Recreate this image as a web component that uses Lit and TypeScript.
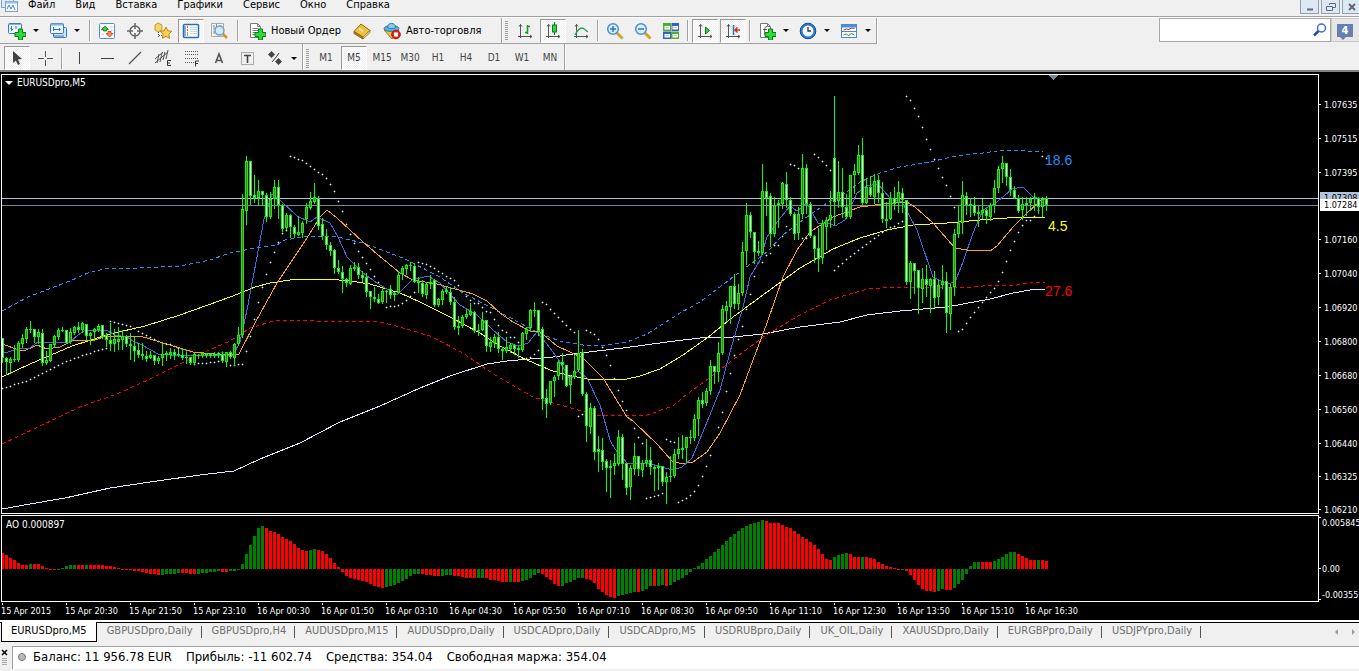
import { LitElement, html, svg, css, nothing } from "lit";
import { customElement, state } from "lit/decorators.js";
import { classMap } from "lit/directives/class-map.js";

/* Bars are 4px apart. Each record is high, body top, body bottom, low; u = rising, d = falling. */
const STEP = 4;
const LEFT = 2;
const CANDLES = `
338,338,358,362d 357,358,362,374d 357,359,363,372u 345,359,360,361d 341,343,360,361u 334,338,344,347u 327,329,339,342u 321,329,330,332d
329,329,337,342d 329,332,337,343u 329,333,363,365d 351,360,363,364u 344,344,361,361u 335,336,345,347u 328,330,337,339u 327,330,331,331d
330,330,343,343d 328,332,342,343u 326,327,333,334u 322,327,330,332d 322,323,330,332u 324,324,336,339d 332,333,336,344u 328,329,332,339u
324,326,330,331u 325,325,337,338d 333,335,340,346d 323,340,344,350d 329,339,344,351u 327,339,342,349u 330,336,340,349u 335,336,344,346d
333,344,346,359d 337,346,351,361d 343,350,355,357d 343,354,356,359d 351,356,359,361d 351,355,358,358u 355,355,361,364d 356,358,361,363u
343,354,358,365u 351,353,355,360u 348,352,355,358u 349,352,355,359d 349,354,355,356d 349,355,358,359d 352,357,358,363d 357,357,363,364d
353,354,363,364u 354,355,356,358d 353,353,356,357u 353,354,356,357d 353,354,356,357u 352,354,356,357u 352,353,355,357u 352,354,361,362d
352,352,362,366u 351,352,357,358d 343,344,358,365u 327,335,344,345u 194,209,335,337u 156,161,211,224u 161,161,196,204d 175,195,198,202d
180,191,198,205u 191,191,195,205d 193,195,217,221d 192,199,217,218u 180,187,199,208u 180,187,205,218d 204,205,229,231d 213,215,228,229u
214,215,227,237d 225,227,234,237d 216,232,235,235u 221,223,233,237u 203,207,219,223u 192,201,208,209u 183,197,202,203u 196,198,226,229d
218,224,236,239d 229,236,245,249d 242,245,251,255d 249,250,268,273d 260,268,272,273d 266,272,279,292d 278,279,283,286d 265,268,284,284u
262,267,269,270d 263,267,275,278d 271,275,278,281d 273,277,292,296d 291,291,297,308d 287,297,299,301d 294,299,303,303d 289,291,302,303u
290,291,292,302d 285,289,295,298d 292,293,295,300u 271,275,293,293u 266,268,274,279u 264,265,269,274u 262,265,266,270d 264,266,282,282d
277,281,283,292d 280,283,294,296d 282,284,295,298u 275,282,284,288u 279,280,305,306d 298,299,305,306u 289,291,300,304u 287,290,292,293d
287,292,302,304d 297,302,327,329d 316,326,328,334d 315,317,326,327u 309,314,317,318u 303,311,315,315u 311,312,331,332d 324,330,331,335d
312,320,330,330u 320,320,346,351d 337,342,347,351u 334,337,343,347u 332,337,349,352d 347,349,351,359d 337,347,351,352u 343,345,349,352u
344,345,349,354d 346,348,350,357d 332,333,350,351u 327,329,334,339u 309,310,328,331u 302,310,311,316d 310,310,331,335d 327,329,399,409d
389,398,404,417d 381,381,403,404u 375,377,381,396u 361,362,376,379u 353,362,365,379d 365,365,386,386d 375,376,385,403u 355,371,377,378u
330,353,370,371u 349,352,394,395d 392,394,426,441d 403,408,427,433u 406,408,452,459d 436,449,452,471d 438,450,462,469d 459,461,468,491d
460,466,468,497d 454,463,466,474u 430,437,464,465u 434,437,464,479d 463,463,488,494d 465,468,487,499u 443,456,469,474u 456,456,469,475d
460,463,470,476u 439,460,463,466u 447,460,467,474d 466,467,469,490d 463,466,468,489u 466,466,482,485d 472,477,482,503u 456,476,477,481d
449,454,476,477u 437,449,454,458u 435,448,450,458u 437,437,448,462u 430,437,438,443d 414,419,438,440u 397,400,419,435u 392,400,404,407d
388,391,403,405u 360,366,391,394u 366,366,372,383d 342,353,372,381u 305,309,353,354u 301,306,311,321u 286,286,307,323u 274,286,304,308d
284,293,304,309u 242,252,293,295u 203,215,251,264u 212,215,232,237d 232,232,252,263d 241,251,253,255u 164,191,253,254u 182,191,198,215d
193,196,234,246d 197,205,234,236u 200,203,205,227u 182,183,204,208u 172,184,200,207d 197,200,214,215d 212,214,234,239d 207,214,233,239u
154,168,214,218u 164,168,204,213d 202,204,236,237d 235,236,249,262d 228,248,259,271d 220,223,258,263u 217,220,227,249u 191,215,220,227u
96,158,202,224d 161,192,201,207u 168,192,207,217d 194,207,217,218d 175,175,217,218u 164,171,175,193u 145,155,173,174u 138,155,203,204d
178,187,203,203u 176,187,195,196d 174,181,197,203u 175,180,193,202d 182,193,219,222d 202,219,221,227u 192,198,219,219u 187,198,204,209d
181,192,203,212u 188,193,200,212d 200,200,282,284d 261,263,282,298u 263,263,271,293d 270,270,288,313d 268,279,289,302u 265,279,285,296d
278,279,286,312u 271,279,298,307d 280,285,297,304u 265,281,285,288u 272,281,313,332d 284,287,314,329u 229,234,287,295u 205,223,234,237u
181,195,223,233u 192,196,205,214d 198,204,206,216d 197,205,213,215d 205,212,214,226d 199,210,213,218u 209,210,216,223d 203,205,217,220u
180,188,205,212u 166,169,188,192u 156,163,169,182u 163,163,177,185d 169,177,190,195d 186,190,198,198d 195,198,211,212d 197,204,210,219u
197,203,205,215u 197,199,203,210u 193,197,199,210u 197,198,207,213d 197,199,207,216u 196,198,205,210d`
  .trim().split(/\s+/)
  .map((r) => ({ up: r.endsWith("u"), v: r.slice(0, -1).split(",").map(Number) }));

/* Parabolic SAR: first bar index, then the level of each following bar. */
const SAR: [number, number[]][] = [
  [0, [388,387,386,384,383,382,381,379,377,375,373,371,369,367,365,363,361,360,358,357,355,354,353,351,350,349,348]],
  [27, [321,322,323,324,325,326,328,331,333,335,337,339,341,343,344,344,346,348,349,350,351]],
  [48, [364,363,363,363,362,362,361,352]],
  [57, [365,365,364,364,351,336,319,302,287,274,262,252,242,233,230]],
  [72, [156,157,159,160,163,166,169,172,174,178,184,191,201,211,224,234,243,251,257,263,269,276,282,287]],
  [96, [307,306,306,305,303,300,296,292]],
  [104, [262,263,264,266,268,271,273,276,278,280,285,291,296,300,303,303,307,311,312,319,325,330,332,337,337,342]],
  [130, [358,358,357,354,350]],
  [135, [302,304,309,313,317,321,325,329,332]],
  [144, [416,414]],
  [146, [330,332,334,339,347,355,365,378,390,401,410,419,428,437,443]],
  [161, [498,497,496,495,493]],
  [166, [439,441,442]],
  [169, [502,500,498,495,491,485,476,466,455,440,427,412,391,373,355,339,326,309,294,276,262,262,255,253,245,245,236,226]],
  [197, [164,165,168,238,238]],
  [203, [154,157,161,165,170]],
  [208, [270,266,263,259,256,253,250,247,244,241,238,235,232,230,227,226,223,221]],
  [226, [96,100,108,116,127,139,149,159,168,177,185,196,207]],
  [239, [331,329,323,317,312,307,302,297,292,288,281,272,261,250,241,232,225,220,220,216,210,156,158]],
];

const LINES = [
  { cls: "long", pts: "2,509 30,504 65,498 110,488 150,482 200,475 234,471 260,459 300,443 340,422 380,406 420,388 450,376 487,364 507,361 530,359 553,357 580,353 623,348 667,342 700,338 733,337 763,334 800,327 840,322 867,315 900,311 947,307 963,304 990,299 1013,293 1030,290 1045,289" },
  { cls: "lower", pts: "2,444 40,426 80,407 117,394 150,379 180,364 200,354 230,341 250,328 277,320 287,321 300,320 333,322 343,321 380,322 400,327 430,336 463,353 486,369 500,378 533,397 567,407 597,415 623,416 647,415 673,406 687,394 700,385 730,362 763,337 800,315 830,300 867,289 900,287 973,287 993,285 1010,286 1030,283 1045,282" },
  { cls: "upper", pts: "2,311 28,297 70,281 90,272 110,268 140,268 180,266 210,260 230,253 250,249 277,245 285,240 303,237 333,236 363,243 403,258 440,277 463,293 490,307 520,323 538,333 560,341 583,345 607,345 627,342 647,334 680,313 700,302 733,277 767,252 783,235 807,217 827,203 843,195 860,182 880,173 900,167 930,162 947,158 963,155 983,153 997,151 1013,150 1027,151 1043,151" },
  { cls: "mid", pts: "2,377 30,364 72,346 110,334 145,326 180,315 233,296 255,287 270,283 297,279 327,279 350,281 370,284 400,293 420,302 450,317 480,333 500,346 527,360 550,370 567,375 587,379 607,380 627,379 640,376 660,369 683,355 707,338 733,317 767,292 800,268 833,249 860,238 887,230 913,225 947,223 980,220 1020,217 1045,217" },
  { cls: "slow", pts: "2,344 16,349 24,351 37,345 47,349 60,347 72,341 95,340 106,336 140,336 160,342 193,352 215,354 239,354 255,323 277,283 307,238 320,217 327,210 337,218 363,242 377,254 400,273 413,280 437,284 473,294 487,301 500,313 513,322 530,331 540,332 557,346 583,358 603,378 627,417 633,421 658,445 672,461 682,464 693,462 707,452 720,433 740,395 750,368 767,323 783,277 797,250 810,232 833,217 860,207 883,204 907,202 915,207 933,223 955,248 967,250 990,251 997,246 1013,227 1027,213 1040,201 1045,198" },
  { cls: "fast", pts: "2,353 8,352 20,348 30,348 38,342 70,342 78,335 84,331 97,330 106,330 115,335 127,337 133,341 142,345 158,354 170,355 197,356 233,355 240,342 247,310 254,273 264,219 272,194 280,200 297,216 310,222 317,217 330,223 338,237 347,257 363,273 377,283 397,295 412,280 428,276 440,283 460,305 477,315 493,330 507,342 518,346 528,343 537,332 550,348 560,362 570,380 578,371 587,378 600,405 610,440 615,449 627,463 647,463 662,467 672,470 682,467 692,458 705,427 720,390 730,352 743,307 750,277 760,260 767,237 777,222 790,206 797,211 807,203 818,223 828,223 835,226 845,220 857,193 867,186 878,184 890,198 902,202 917,230 933,277 947,284 955,282 963,262 973,233 983,210 997,202 1012,189 1023,187 1033,197 1045,200" },
];

/* Awesome Oscillator: runs of one colour, bar heights in pixels. */
const AO = `r16,14,11,9,6,4,4 g5 r5,5,3,1,-1,-1 g-1,1,3,4,4 r4,4 g4 r4,4,4,4,3,3,2,1,-1,-1,-1,-2,-2,-3,-4,-5,-5,-6
g-6,-5,-5,-5,-4 r-4,-4,-5,-5 g-5,-4,-4,-3,-3,-2 r-3,-3 g-2,-2,-1,5,15,24,33,41,43
r41,38,37,35,32,30,28,25,21,19,18 g19,20 r19,18,15,11,6,2,-3,-7,-9,-10,-11,-12,-13,-15,-17,-18,-19
g-18,-17,-16,-14,-12,-10,-7,-5,-5 r-5,-6,-6,-7,-7 g-7,-6,-6 r-7,-7,-8,-9,-9,-9 g-9,-9 r-9,-11,-11,-12,-13,-13 g-13 r-13,-13
g-12,-11,-9,-6,-4 r-5,-8,-11,-15,-17 g-17,-14,-13,-11,-9,-9 r-10,-11,-14,-20,-23,-26,-28,-29 g-27,-26,-25,-24,-23 r-23
g-22,-20,-17 r-17 g-17,-16 r-17 g-16,-13,-11,-9,-6,-3,1,3,6,10,13,17,20,24,28,32,35,38,41,43,45,46,47,49
r48,46,46,46,44,42,41,38,35,32,30,27,24,20,15,10,9 g12,14,15,16 r15,12,12 g12 r12,11,10,7,5,3,2,1,-1 g-1
r-2,-6,-11,-16,-20,-22,-22,-23 g-22,-20 r-21,-21 g-19,-15,-11,-5,3,7,7 r7,7,7 g8,10,12,15,17,17 r15,13,11,9,9 g9 r9,8`
  .trim().split(/\s+/)
  .flatMap((run) => run.slice(1).split(",").map((n) => ({ up: run[0] === "g", h: Number(n) })));

const PRICES: [string, number][] = [
  ["1.07635", 104], ["1.07515", 138], ["1.07395", 172], ["1.07160", 239], ["1.07040", 273], ["1.06920", 307],
  ["1.06800", 341], ["1.06680", 375], ["1.06560", 409], ["1.06440", 443], ["1.06325", 476], ["1.06210", 509],
];
const TIMES = ["15 Apr 2015", "15 Apr 20:30", "15 Apr 21:50", "15 Apr 23:10", "16 Apr 00:30", "16 Apr 01:50", "16 Apr 03:10",
  "16 Apr 04:30", "16 Apr 05:50", "16 Apr 07:10", "16 Apr 08:30", "16 Apr 09:50", "16 Apr 11:10", "16 Apr 12:30",
  "16 Apr 13:50", "16 Apr 15:10", "16 Apr 16:30"];
const TABS = ["EURUSDpro,M5", "GBPUSDpro,Daily", "GBPUSDpro,H4", "AUDUSDpro,M15", "AUDUSDpro,Daily", "USDCADpro,Daily",
  "USDCADpro,M5", "USDRUBpro,Daily", "UK_OIL,Daily", "XAUUSDpro,Daily", "EURGBPpro,Daily", "USDJPYpro,Daily"];
const FRAMES = ["M1", "M5", "M15", "M30", "H1", "H4", "D1", "W1", "MN"];
const MENU = ["Файл", "Вид", "Вставка", "Графики", "Сервис", "Окно", "Справка"];
const ACCOUNT = ["Баланс: 11 956.78 EUR", "Прибыль: -11 602.74", "Средства: 354.04", "Свободная маржа: 354.04"];

const plus = svg`<path d="M10.500 7h4v3.500H18v4h-3.500V18h-4v-3.500H7v-4h3.500z" fill="#2fd83c" stroke="#0a7d12"/>`;
const axes = svg`<path d="M4.500 2v14M2 14.500h14M3 4.500l1.500-2 1.500 2M14 13l2 1.500-2 1.500" fill="none" stroke="#555"/>`;
const page = svg`<path d="M2.500 1.500h7l3 3v11h-10z" fill="#fff" stroke="#777"/><path d="M9.500 1.500v3h3" fill="none" stroke="#777"/>`;
const ICONS: Record<string, unknown> = {
  newChart: svg`<rect x=".5" y="1.500" width="13" height="10" rx="1" fill="#eef6ff" stroke="#3b78b8"/><path d="M1 2.500h12" stroke="#7fb2e0"/><path d="M3.500 4v5M2.500 6.500h1M3.500 7.500H5M8 4v3" stroke="#3b78b8"/>${plus}`,
  profiles: svg`<rect x="4.500" y="5.500" width="13" height="10" rx="1" fill="#cfe4f8" stroke="#3b78b8"/><rect x="1.500" y="1.500" width="13" height="10" rx="1" fill="#eef6ff" stroke="#3b78b8"/><path d="M2 2.500h12" stroke="#7fb2e0" stroke-width="2"/><path d="M4.500 5v4M4 7.500h7M10 6l1.500 1.500L10 9M5 14h10" fill="none" stroke="#3b78b8"/>`,
  watch: svg`<rect x="1.500" y="1.500" width="15" height="15" rx="1" fill="#fff" stroke="#4a90d0"/><path d="M3 5.500h2M3 8.500h2M3 12h3M12 5h3M13 8h2" stroke="#bcd6ee"/><path d="M7 4l3.500 3.500H8.500V9h-3V7.500H3.500z" fill="#3ad04a" stroke="#0b7a18" stroke-width=".8"/><path d="M11.500 15L8 11.500h2V9.500h3v2h2z" fill="#ff8a5c" stroke="#c8360e" stroke-width=".8"/>`,
  cross: svg`<circle cx="9" cy="9" r="5" fill="none" stroke="#666" stroke-width="1.500"/><path d="M9 1v6M9 11v6M1 9h6M11 9h6" stroke="#666" stroke-width="1.500"/>`,
  navigator: svg`<path d="M1 3l3-2 4 2v5l-4 2-3-2z" fill="#f6d56a" stroke="#c59a2e"/><path d="M4.500 10v6M5 13.500h4" stroke="#555" stroke-dasharray="1 1"/><path d="M12 5l1.800 3.800 4 .5-3 2.800.8 4.200L12 14.300l-3.600 2 .8-4.200-3-2.800 4-.5z" fill="#fbd24c" stroke="#b98512"/>`,
  dataWindow: svg`<rect x="1.500" y="2.500" width="15" height="13" rx="1" fill="#fff" stroke="#2b6cb0" stroke-width="1.500"/><path d="M3 4v10" stroke="#2b6cb0"/><path d="M5 5h1M5 8h1" stroke="#d22" stroke-width="1.500"/><path d="M8 5.500h7M8 7.500h7M8 9.500h7M8 11.500h7" stroke="#bcd6ee"/><path d="M5 11h1M5 13h1" stroke="#333"/>`,
  tester: svg`<path d="M1.500 1.500h12v13h-12z" fill="#f4f4f4" stroke="#aaa"/><path d="M4 3v5M6.500 2v5M11 3v4M4 12V9" stroke="#888"/><circle cx="9.500" cy="8.500" r="4.500" fill="#cfe8fa" fill-opacity=".85" stroke="#6ba3cf" stroke-width="1.500"/><path d="M13 12l4 4" stroke="#c9992b" stroke-width="2.500"/>`,
  order: svg`${page}<path d="M4.500 6.500h6M4.500 8.500h6M4.500 10.500h4M4.500 12.500h3" stroke="#777"/>${plus}`,
  book: svg`<path d="M1 9.500L8 2l9 6.500L10 16z" fill="#f0c040" stroke="#8a6410"/><path d="M1 9.500v2L10 17v-2z" fill="#b3801c" stroke="#8a6410"/><path d="M10 15l7-6.500v2L10 17z" fill="#fff2c0" stroke="#8a6410" stroke-width=".8"/><path d="M6 6.500l4 3" stroke="#ffe9a0" stroke-width="2"/>`,
  auto: svg`<path d="M1 8l8 9 7-9z" fill="#f0c040" stroke="#a87c18"/><ellipse cx="8.500" cy="6.500" rx="7.500" ry="3" fill="#5db1de" stroke="#2a7aa8"/><path d="M4.500 5.500c0-5.500 8-5.500 8 0-2 1.500-6 1.500-8 0z" fill="#86cbee" stroke="#2a7aa8"/><circle cx="13" cy="12.500" r="4.300" fill="#e02a1a" stroke="#a01208"/><rect x="11" y="10.500" width="4" height="4" fill="#fff"/>`,
  bars: svg`${axes}<path d="M11.500 3v9M9 10.500h2.500M11.500 4.500H14" stroke="#0a9a28" stroke-width="1.500" fill="none"/>`,
  candles: svg`${axes}<path d="M10.500 0v13" stroke="#0a7d12"/><rect x="8.500" y="3" width="4" height="7" fill="#2fd83c" stroke="#0a7d12"/>`,
  line: svg`${axes}<path d="M3 13c2-4 4-7 7-7 2 0 3 2 6 4" fill="none" stroke="#2aa54a" stroke-width="1.300"/>`,
  zoomIn: svg`<path d="M11 11l5.500 5.500" stroke="#d2a12a" stroke-width="3"/><circle cx="7" cy="7" r="5.300" fill="#d6efff" stroke="#4b8fca" stroke-width="1.500"/><path d="M4 7h6M7 4v6" stroke="#2f78b8" stroke-width="1.500"/>`,
  zoomOut: svg`<path d="M11 11l5.500 5.500" stroke="#d2a12a" stroke-width="3"/><circle cx="7" cy="7" r="5.300" fill="#d6efff" stroke="#4b8fca" stroke-width="1.500"/><path d="M4 7h6" stroke="#2f78b8" stroke-width="1.500"/>`,
  tile: svg`<path d="M1 1h8v8H1zM9 9.500h8V17H9z" fill="#4fae2c"/><path d="M9.500 1H17v8H9.500zM1 9.500h8V17H1z" fill="#2f62c8"/><path d="M2.500 4h5.500v3.500H2.500zM10.500 4H16v3.500h-5.500zM2.500 12h5.500v3.500H2.500zM10.500 12H16v3.500h-5.500z" fill="#fff"/><path d="M3.500 5.700h3M11.500 5.700h3M3.500 13.700h3M11.500 13.700h3" stroke="#9bb" />`,
  scroll: svg`${axes}<path d="M9.500 5l4 3.500-4 3.500z" fill="#3ad04a" stroke="#0a7d12"/>`,
  shift: svg`${axes}<path d="M9.500 3v10" stroke="#2b6cb0" stroke-width="1.500"/><path d="M11 8h5M13.500 5.500L11 8l2.500 2.500" stroke="#c8360e" stroke-width="1.500" fill="none"/>`,
  indicator: svg`${page}<path d="M9 4.500c-3 0-2 3-2.500 8M5 7.500h4" fill="none" stroke="#555"/>${plus}`,
  clock: svg`<circle cx="9" cy="9" r="7.800" fill="#2478d0" stroke="#0d4f98"/><circle cx="9" cy="9" r="5.500" fill="#eef6fc"/><path d="M9 5v4h3" fill="none" stroke="#333" stroke-width="1.300"/>`,
  template: svg`<rect x="1.500" y="2.500" width="15" height="13" fill="#fff" stroke="#4a86c8"/><path d="M2 4h14" stroke="#4a90d8" stroke-width="3"/><path d="M2 9.500h14" stroke="#4a86c8"/><path d="M3.500 8l3-1 2 .5 3-1.500 3 .5" fill="none" stroke="#a33a1a"/><path d="M3.500 13l3-1 2 1.500 3-2 3 1.500" fill="none" stroke="#3a9a3a"/>`,
  pointer: svg`<path d="M5 2l9 8-4 .5 2 4.500-2 1-2.200-4.500L5 14z" fill="#444"/>`,
  plusThin: svg`<path d="M9.500 2v6M9.500 11v6M2 9.500h6M11 9.500h6" stroke="#555"/>`,
  vline: svg`<path d="M9.500 3v12" stroke="#444"/>`,
  hline: svg`<path d="M3 9.500h13" stroke="#444"/>`,
  diag: svg`<path d="M3 15L15 3" stroke="#555" stroke-width="1.200"/>`,
  channel: svg`<path d="M1 14L14 3M1 10L9 3M5 5l-2 9M8 4l-2 9M11 3L9 11M14 1l-2 9" stroke="#555" fill="none"/><path d="M17 11.500h-3.500v5H17M13.500 14H16" stroke="#333" fill="none"/>`,
  fibo: svg`<path d="M3 2.500h13M3 5.500h13M3 9.500h13M3 13.500h9" stroke="#555" stroke-dasharray="1 1"/><path d="M17 12h-3.500v5.500M13.500 14.500H16" stroke="#333" fill="none"/>`,
  text: svg`<path d="M5.500 14L9 5l3.500 9M6.500 11.500h5" stroke="#555" stroke-width="1.600" fill="none"/>`,
  label: svg`<path d="M3.500 3.500h12v12h-12z" stroke="#666" stroke-dasharray="1 1" fill="none"/><path d="M6 6.500h7M9.500 6v8" stroke="#444" stroke-width="1.600"/>`,
  shapes: svg`<path d="M5.500 2L9 5.500 5.500 9 2 5.500zM12.500 9l3.500 3.500-3.500 3.500L9 12.500z" fill="#444"/><path d="M6 13l5-6 2-3" stroke="#444"/>`,
};
const icon = (name: string) => html`<svg class="icon" width="18" height="18" viewBox="0 0 18 18" aria-hidden="true">${ICONS[name]}</svg>`;

@customElement("tool-button")
class ToolButton extends LitElement {
  static properties = {
    icon: {}, label: {}, tip: {}, pressed: { type: Boolean }, menu: { type: Boolean }, strong: { type: Boolean },
  };
  declare icon: string;
  declare label: string;
  declare tip: string;
  declare pressed: boolean;
  declare menu: boolean;
  declare strong: boolean;
  static styles = css`
    :host { display: block; flex: none; }
    button {
      display: flex; align-items: center; box-sizing: border-box; height: 24px; min-width: 26px; padding: 0 3px;
      border: 1px solid transparent; background: none; color: #444; white-space: nowrap;
      font: 11px/14px "DejaVu Sans Condensed", "DejaVu Sans", sans-serif;
    }
    .pressed {
      border-color: #9a9a9a #fff #fff #9a9a9a;
      background: repeating-conic-gradient(#fff 0 25%, #f0f0f0 0 50%) 0 0 / 2px 2px;
    }
    .frame { justify-content: center; padding: 0; font-size: 10px; }
    .menu { width: 39px; }
    .wide { gap: 5px; padding: 0 5px; color: #000; }
    .icon { flex: none; display: block; }
    .arrow { margin-left: 7px; border: 3px solid transparent; border-top-color: #000; border-bottom: 0; }
  `;
  render() {
    return html`<button type="button" title=${this.tip || this.label || ""} aria-pressed=${this.pressed ? "true" : "false"}
      class=${classMap({ pressed: !!this.pressed, menu: !!this.menu, frame: !this.icon, wide: !!this.strong })}>
      ${this.icon ? icon(this.icon) : nothing}${this.label ? html`<span>${this.label}</span>` : nothing}${this.menu ? html`<span class="arrow"></span>` : nothing}
    </button>`;
  }
}

@customElement("price-chart")
class PriceChart extends LitElement {
  static styles = css`
    :host {
      display: grid; grid-template-columns: minmax(0, 1fr) 40px; grid-template-rows: 440px 87px 17px; row-gap: 1px;
      padding: 2px 0 0 1px; background: #000; color: #fff;
      font: 9px/12px "DejaVu Sans Condensed", "DejaVu Sans", sans-serif;
    }
    .pane { position: relative; box-sizing: border-box; border: 1px solid #fff; overflow: hidden; }
    svg { display: block; width: 100%; height: 100%; }
    .axis { overflow: visible; }
    text { fill: #fff; }
    .title { position: absolute; left: 3px; top: 2px; display: flex; align-items: center; gap: 4px; font-size: 10px; }
    .drop { border: 4px solid transparent; border-top-color: #fff; border-bottom: 0; }
    .ao { left: 4px; top: 3px; }
    .crisp { shape-rendering: crispEdges; }
    polyline { fill: none; stroke-width: 1; shape-rendering: crispEdges; }
    .long { stroke: #e6e6fa; } .lower { stroke: #f00; stroke-dasharray: 4 3; } .upper { stroke: #1e90ff; stroke-dasharray: 4 3; }
    .mid { stroke: #ff0; } .slow { stroke: #ffa500; } .fast { stroke: #4169e1; }
    .line { fill: #0f0; } .rise { fill: #7a5c3c; } .fall { fill: #fff; }
    .halo { fill: #2f4f4f; } .dot { fill: #f0ffff; }
    .up { fill: #008000; } .down { fill: #f00; }
    .ask { fill: #b0c4de; } .bid { fill: #778899; } .bidbox { fill: #fff; } .dark { fill: #000; }
    .level { font: 14px "Liberation Sans", sans-serif; }
    .blue { fill: #1e90ff; } .yellow { fill: #ff0; } .red { fill: #f00; } .mark { fill: #778899; }
    .times { display: flex; grid-column: 1 / 3; overflow: hidden; }
    .time { flex: none; width: 64px; white-space: nowrap; }
    .time::before { content: ""; display: block; width: 1px; height: 2px; margin-left: 1px; background: #fff; }
  `;
  private candle(c: { up: boolean; v: number[] }, i: number) {
    const x = LEFT + STEP * i;
    const [hi, top, bottom, lo] = c.v;
    const h = Math.max(bottom - top, 1);
    return svg`<rect class="line" x=${x} y=${hi} width="1" height=${lo - hi + 1}></rect>
      <rect class="line" x=${x - 1} y=${top} width="3" height=${h}></rect>
      ${h > 2 ? svg`<rect class=${c.up ? "rise" : "fall"} x=${x} y=${top + 1} width="1" height=${h - 2}></rect>` : nothing}`;
  }
  render() {
    return html`
      <div class="pane">
        <svg role="img" aria-label="EURUSDpro, M5">
          <g transform="translate(-2 -75)">
            <g class="crisp">
              <rect class="ask" x="2" y="198" width="100%" height="1"></rect>
              <rect class="bid" x="2" y="205" width="100%" height="1"></rect>
              <path class="mark" d="M1048 75h10l-5 5z"></path>
              ${SAR.map(([start, ys]) => ys.map((y, k) => {
                const x = LEFT + STEP * (start + k);
                return svg`<path class="halo" d="M${x - 1} ${y}h3v1h-3zM${x} ${y - 1}h1v3h-1z"></path><rect class="dot" x=${x} y=${y} width="1" height="1"></rect>`;
              }))}
            </g>
            ${LINES.map((l) => svg`<polyline class=${l.cls} points=${l.pts}></polyline>`)}
            <g class="crisp">${CANDLES.map((c, i) => this.candle(c, i))}</g>
            <text class="level blue" x="1045" y="165">18.6</text>
            <text class="level yellow" x="1048" y="231">4.5</text>
            <text class="level red" x="1045" y="296">27.6</text>
          </g>
        </svg>
        <div class="title"><span class="drop"></span>EURUSDpro,M5</div>
      </div>
      <svg class="axis">
        <g transform="translate(0 -74)">
          ${PRICES.map(([t, y]) => svg`<rect x="0" y=${y} width="2" height="1" fill="#fff"></rect><text x="5" y=${y + 4}>${t}</text>`)}
          <rect class="ask" x="1" y="192" width="39" height="8"></rect><text class="dark" x="5" y="201">1.07308</text>
          <rect class="bidbox" x="1" y="199" width="39" height="12"></rect><text class="dark" x="5" y="208">1.07284</text>
        </g>
      </svg>
      <div class="pane">
        <svg class="crisp" role="img" aria-label="AO">
          <g transform="translate(-2 -516)">
            ${AO.map((b, i) => svg`<rect class=${b.up ? "up" : "down"} x=${LEFT + STEP * i - 1} y=${b.h > 0 ? 569 - b.h : 569} width="3" height=${Math.abs(b.h)}></rect>`)}
          </g>
        </svg>
        <div class="title ao">AO 0.000897</div>
      </div>
      <svg class="axis">
        <path d="M0 2.500h2M0 53.500h2M0 84.500h2" stroke="#fff"></path>
        <text x="3" y="11">0.005845</text><text x="3" y="57">0.00</text><text x="3" y="83">-0.003559</text>
      </svg>
      <div class="times">${TIMES.map((t) => html`<span class="time">${t}</span>`)}</div>`;
  }
}

@customElement("app-root")
class AppRoot extends LitElement {
  @state() private frame = "M5";
  @state() private tab = 0;

  static styles = css`
    :host { display: flex; flex-direction: column; min-height: 100vh; background: #f0f0f0; color: #000; overflow: hidden; font: 11px/14px "DejaVu Sans Condensed", "DejaVu Sans", sans-serif; }
    button, input { font: inherit; color: inherit; }
    .menubar { display: flex; box-sizing: border-box; height: 18px; border-bottom: 1px solid #fff; box-shadow: inset 0 -1px #a0a0a0; overflow: hidden; }
    .menubar > svg { flex: none; margin: 0 10px 0 1px; }
    .menu { display: flex; gap: 20px; height: 14px; margin-top: -1px; }
    .menu button { padding: 0; border: 0; background: none; line-height: 12px; height: 12px; }
    .win { display: flex; gap: 2px; margin: 0 -2px 0 auto; }
    .win button { width: 19px; height: 14px; padding: 0; border: 1px solid #8f9fb0; border-top: 0; background: #dce9f5; }
    .win svg { display: block; margin: 0 auto; }
    .row { display: flex; box-sizing: border-box; height: 26px; }
    .row.last { height: 28px; border-bottom: 2px solid #808080; }
    .group { display: flex; gap: 2px; align-items: center; box-sizing: border-box; height: 26px; padding: 0 6px 0 4px; border-right: 1px solid #a0a0a0; border-bottom: 1px solid #a0a0a0; box-shadow: 1px 0 #fff; }
    .group + .group { padding-left: 9px; }
    .group.tight { padding-right: 1px; }
    .grip { flex: none; width: 3px; height: 19px; margin: 0 2px 0 -6px; background: repeating-linear-gradient(#a0a0a0 0 1px, #f0f0f0 1px 2px); }
    .last .group { padding-top: 2px; border-bottom: 0; }
    .sep { width: 4px; height: 21px; background: linear-gradient(90deg, transparent 1px, #a0a0a0 1px 2px, #fff 2px 3px, transparent 3px); }
    .sep.wide { width: 6px; background: linear-gradient(90deg, transparent 3px, #a0a0a0 3px 4px, #fff 4px 5px, transparent 5px); }
    .spread { margin-right: 8px; }
    .search { display: flex; margin-left: auto; }
    .field { display: flex; align-items: center; box-sizing: border-box; width: 172px; height: 24px; border: 1px solid #a9a9a9; background: #fff; }
    .field input { flex: 1; min-width: 0; border: 0; outline: 0; padding: 0 4px; background: none; }
    .field svg { margin-right: 3px; }
    .news { width: 28px; height: 24px; padding: 0; border: 1px solid #c8c8c8; border-right: 0; background: #e6e6e6; }
    .bubble { position: relative; display: block; width: 16px; margin-left: 5px; background: #6480b0; color: #fff; font-weight: bold; line-height: 13px; }
    .bubble::after { content: ""; position: absolute; left: 3px; top: 13px; border: 3px solid transparent; border-top-color: #6480b0; border-bottom: 0; }
    .tabs { display: flex; box-sizing: border-box; height: 25px; border-top: 2px solid #fff; box-shadow: inset 0 1px #000; }
    .tab { flex: none; position: relative; height: 18px; padding: 0 9px 0 10px; border: 0; background: none; color: #6e6e6e; line-height: 18px; }
    .tab:not(.active)::after { content: ""; position: absolute; right: 0; top: 4px; width: 1px; height: 12px; background: #555; }
    .tab.active { margin-left: 1px; height: 20px; padding: 0 9px 2px; border: 1px solid #000; border-top: 0; background: #fff; color: #000; }
    .scroll { display: flex; gap: 12px; align-items: center; height: 19px; margin-left: auto; padding-right: 3px; }
    .scroll button { padding: 0; border: 0; background: none; }
    .scroll svg { display: block; }
    .status { display: flex; box-sizing: border-box; height: 27px; border-bottom: 1px solid #a0a0a0; }
    .side { width: 12px; padding: 4px 1px; box-sizing: border-box; }
    .side button { display: block; padding: 0; border: 0; background: none; }
    .side svg { display: block; }
    .terminal { flex: 1; display: flex; align-items: center; gap: 14px; box-sizing: border-box; height: 23px; margin-top: 1px; padding: 0 0 2px 5px; border: 1px solid #a0a0a0; border-width: 1px 0 0 1px; background: #fff; font-size: 13px; line-height: 18px; }
    .bullet { width: 6px; height: 6px; margin-right: -7px; border: 1px solid #777; border-radius: 50%; background: #bbb; }
  `;

  render() {
    return html`
      <header class="menubar">
        <svg width="17" height="13" viewBox="0 0 17 13"><rect x=".5" y="-3.500" width="12" height="11" fill="#dcebfa" stroke="#7ba3cc"/><rect x="4.500" y="1.500" width="12" height="10" fill="#eef6ff" stroke="#7ba3cc"/><path d="M5 2.500h11" stroke="#9cc0e6" stroke-width="2"/><path d="M6 9l2-4 2 4 2-4 2 5" fill="none" stroke="#5a8cc0"/></svg>
        <nav class="menu">${MENU.map((m) => html`<button type="button">${m}</button>`)}</nav>
        <div class="win">
          <button type="button" aria-label="Minimize"><svg width="11" height="10"><path d="M3 7.500h6" stroke="#667" stroke-width="2"/></svg></button>
          <button type="button" aria-label="Restore"><svg width="11" height="10"><path d="M4.500 3V1.500h6v4H8M1.500 4.500h6v4h-6z" fill="none" stroke="#667"/></svg></button>
          <button type="button" aria-label="Close"><svg width="11" height="10"><path d="M3 2l6 6M9 2L3 8" stroke="#667" stroke-width="2"/></svg></button>
        </div>
      </header>
      <div class="row">
        <div class="group">
          <tool-button icon="newChart" tip="Новый график" menu></tool-button>
          <tool-button icon="profiles" tip="Профили" menu></tool-button>
          <span class="sep wide"></span>
          <tool-button icon="watch" tip="Обзор рынка"></tool-button>
          <tool-button icon="cross" tip="Окно данных"></tool-button>
          <tool-button icon="navigator" tip="Навигатор"></tool-button>
          <tool-button icon="dataWindow" tip="Терминал" pressed></tool-button>
          <tool-button icon="tester" tip="Тестер"></tool-button>
          <span class="sep wide"></span>
          <tool-button icon="order" label="Новый Ордер" strong></tool-button>
          <tool-button icon="book" tip="MetaEditor"></tool-button>
          <tool-button class="spread" icon="auto" label="Авто-торговля" strong></tool-button>
        </div>
        <div class="group tight">
          <span class="grip"></span>
          <tool-button icon="bars" tip="Бары"></tool-button>
          <tool-button icon="candles" tip="Свечи" pressed></tool-button>
          <tool-button icon="line" tip="Линия"></tool-button>
          <span class="sep"></span>
          <tool-button icon="zoomIn" tip="Увеличить"></tool-button>
          <tool-button icon="zoomOut" tip="Уменьшить"></tool-button>
          <tool-button icon="tile" tip="Окна"></tool-button>
          <span class="sep"></span>
          <tool-button icon="scroll" tip="Автопрокрутка" pressed></tool-button>
          <tool-button icon="shift" tip="Сдвиг графика" pressed></tool-button>
          <span class="sep"></span>
          <tool-button icon="indicator" tip="Индикаторы" menu></tool-button>
          <tool-button icon="clock" tip="Периоды" menu></tool-button>
          <tool-button icon="template" tip="Шаблоны" menu></tool-button>
        </div>
        <div class="search">
          <label class="field"><input type="text" aria-label="Поиск" /><svg width="14" height="14" viewBox="0 0 14 14"><circle cx="8.500" cy="5" r="4" fill="#fff" stroke="#3a70d0" stroke-width="1.500"/><path d="M5.500 8L1 12.500" stroke="#1c4fb0" stroke-width="2.500"/></svg></label>
          <button class="news" type="button" aria-label="Сообщения"><span class="bubble">4</span></button>
        </div>
      </div>
      <div class="row last">
        <div class="group tight">
          <tool-button icon="pointer" tip="Курсор" pressed></tool-button>
          <tool-button icon="plusThin" tip="Перекрестие"></tool-button>
          <span class="sep"></span>
          ${["vline", "hline", "diag", "channel", "fibo", "text", "label"].map((n) => html`<tool-button icon=${n} tip=${n}></tool-button>`)}
          <tool-button icon="shapes" tip="Стрелки" menu></tool-button>
        </div>
        <div class="group tight">
          <span class="grip"></span>
          ${FRAMES.map((f) => html`<tool-button label=${f} ?pressed=${f === this.frame} @click=${() => (this.frame = f)}></tool-button>`)}
        </div>
      </div>
      <price-chart></price-chart>
      <nav class="tabs">
        ${TABS.map((t, i) => html`<button type="button" class=${classMap({ tab: true, active: i === this.tab })} @click=${() => (this.tab = i)}>${t}</button>`)}
        <div class="scroll">
          <button type="button" aria-label="Назад"><svg width="5" height="8"><path d="M4 1v6L1 4z" fill="#999"/></svg></button>
          <button type="button" aria-label="Вперёд"><svg width="5" height="8"><path d="M1 1v6l3-3z" fill="#999"/></svg></button>
        </div>
      </nav>
      <footer class="status">
        <div class="side"><button type="button" aria-label="Закрыть"><svg width="7" height="16"><path d="M1 1l5 5M6 1L1 6" stroke="#000" stroke-width="1.500"/><path d="M1 9.500h5M1 11.500h5M1 13.500h5M1 15.500h5" stroke="#aaa"/></svg></button></div>
        <div class="terminal"><span class="bullet"></span>${ACCOUNT.map((a) => html`<span>${a}</span>`)}</div>
      </footer>`;
  }
}
